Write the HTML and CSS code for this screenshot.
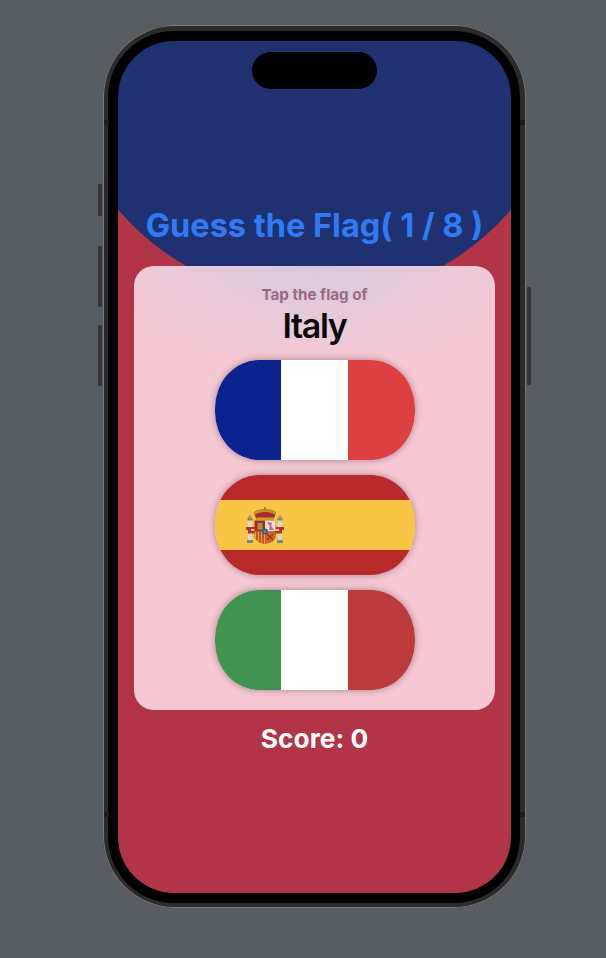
FILE: index.html
```html
<!DOCTYPE html>
<html lang="en">
<head>
<meta charset="utf-8">
<title>Guess the Flag</title>
<link rel="stylesheet" href="styles.css">
</head>
<body>
<div class="phone">
  <span class="side-btn action"></span>
  <span class="side-btn vol-up"></span>
  <span class="side-btn vol-down"></span>
  <span class="side-btn power"></span>
  <span class="band top-l"></span>
  <span class="band top-r"></span>
  <span class="band bot-l"></span>
  <span class="band bot-r"></span>
  <div class="bezel">
    <main class="screen">
      <div class="island"></div>
      <h1 class="title">Guess the Flag( 1 / 8 )</h1>
      <section class="card">
        <p class="prompt">Tap the flag of</p>
        <p class="country">Italy</p>
        <div class="flags">
          <button class="flag tricolor" aria-label="France">
            <span class="blue"></span><span class="white"></span><span class="red"></span>
          </button>
          <button class="flag spain" aria-label="Spain">
            <svg class="arms" viewBox="0 0 38 38" width="38" height="38" aria-hidden="true">
              <!-- pillars -->
              <rect x="1" y="33" width="6" height="3" fill="#6f8790"/>
              <rect x="31" y="33" width="6" height="3" fill="#6f8790"/>
              <rect x="2" y="13" width="4" height="20" fill="#dcd8c8"/>
              <rect x="32" y="13" width="4" height="20" fill="#dcd8c8"/>
              <rect x="1.5" y="11" width="5" height="2.5" fill="#8f8050"/>
              <rect x="31.5" y="11" width="5" height="2.5" fill="#8f8050"/>
              <circle cx="4" cy="10" r="1.8" fill="#a89868"/>
              <circle cx="34" cy="10" r="1.8" fill="#a89868"/>
              <!-- ribbons -->
              <path d="M0 20 H9 V22 H5 V24 H9 V26.5 H2 V23 H0 Z" fill="#b5322a"/>
              <path d="M38 20 H29 V22 H33 V24 H29 V26.5 H36 V23 H38 Z" fill="#b5322a"/>
              <!-- crown -->
              <path d="M8 6 C10 2.5 15 3 19 2 C23 3 28 2.5 30 6 L27.5 12.5 H10.5 Z" fill="#a92c28"/>
              <path d="M8 6 C10 3 15 3 19 2 C23 3 28 3 30 6 L29.2 8 C27 6 22.5 5 19 5 C15.5 5 11 6 8.8 8 Z" fill="#b9962f"/>
              <rect x="10.5" y="10.5" width="17" height="2.4" fill="#c9a12f"/>
              <rect x="18.2" y="0" width="1.6" height="3" fill="#8f7a2a"/>
              <!-- shield -->
              <path d="M8.5 13.5 H29.5 V29 C29.5 33.5 24 36.5 19 36.5 C14 36.5 8.5 33.5 8.5 29 Z" fill="#a82a24"/>
              <rect x="19" y="13.5" width="10.5" height="11" fill="#e6dadd"/>
              <path d="M21 15 L26 16 L25 19 L28 23 L23 23 L24 19 Z" fill="#b8678a"/>
              <rect x="11.5" y="16" width="5" height="6.5" fill="#a8933a"/>
              <path d="M8.5 24.5 H19 V36.5 C14 36.5 8.5 33.5 8.5 29 Z" fill="#dca62c"/>
              <path d="M11 24.5 V33 M14 24.5 V35.5 M17 24.5 V36.5" stroke="#b5322a" stroke-width="1.4" fill="none"/>
              <path d="M19 24.5 H29.5 V29 C29.5 33.5 24 36.5 19 36.5 Z" fill="#c9662c"/>
              <path d="M21 27 L27 33 M27 27 L21 33" stroke="#a82a24" stroke-width="1.1"/>
              <circle cx="19" cy="24.5" r="3" fill="#2c5f9a"/>
              <circle cx="19" cy="24.5" r="1.2" fill="#7a9a5a"/>
            </svg>
          </button>
          <button class="flag tricolor italy" aria-label="Italy">
            <span class="green"></span><span class="white"></span><span class="red"></span>
          </button>
        </div>
      </section>
      <p class="score">Score: 0</p>
    </main>
  </div>
</div>
</body>
</html>
```
FILE: styles.css
```css
* { box-sizing: border-box; }

html, body {
  margin: 0;
  height: 100%;
}

body {
  background: #585c63;
  padding: 25px 0 0 103px;
  overflow: hidden;
  font-family: Inter, "Liberation Sans", sans-serif;
}

.phone {
  position: relative;
  width: 423px;
  height: 883px;
  padding: 6px 6px 5px 5px;
  border-radius: 72px;
  background: #2b2b2b;
  box-shadow: inset 0 0 0 1px #77797c;
}

.side-btn {
  position: absolute;
  background: #343536;
  border-radius: 1px;
}
.action   { left: -5px; top: 159px; width: 4px; height: 32px; }
.vol-up   { left: -5px; top: 221px; width: 4px; height: 61px; }
.vol-down { left: -5px; top: 300px; width: 4px; height: 61px; }
.power    { right: -5px; top: 262px; width: 4px; height: 98px; }

.band {
  position: absolute;
  background: #1c1c1c;
}
.top-l { left: 1px; top: 95px; width: 5px; height: 5px; }
.top-r { right: 1px; top: 95px; width: 5px; height: 5px; }
.bot-l { left: 1px; top: 787px; width: 5px; height: 5px; }
.bot-r { right: 1px; top: 787px; width: 5px; height: 5px; }

.bezel {
  height: 100%;
  padding: 10px 9px 10px 10px;
  background: #000;
  border-radius: 66px;
}

.screen {
  position: relative;
  height: 100%;
  display: flex;
  flex-direction: column;
  align-items: center;
  padding-top: 161px;
  border-radius: 56px;
  overflow: hidden;
  background: radial-gradient(circle 258.5px at 196.5px 1px, #1f3170 99.7%, #b13547 100%);
}

.island {
  position: absolute;
  left: 134px;
  top: 11px;
  width: 125px;
  height: 37px;
  border-radius: 19px;
  background: #000;
}

.title {
  margin: 0;
  font-size: 32.5px;
  line-height: 48px;
  font-weight: 700;
  color: #2f7bf6;
  white-space: nowrap;
}

.card {
  width: 361px;
  height: 444px;
  margin-top: 16px;
  border-radius: 20px;
  display: flex;
  flex-direction: column;
  align-items: center;
  padding-top: 20px;
  background: radial-gradient(ellipse 230px 100px at 50% 0, #d9cadf, #f6c8d3);
}

.prompt {
  margin: 0;
  font-size: 15.2px;
  line-height: 18px;
  font-weight: 700;
  color: #996a88;
}

.country {
  margin: 1px 0 0;
  font-size: 34px;
  line-height: 42px;
  font-weight: 600;
  letter-spacing: -1.4px;
  color: #0a0a0a;
}

.flags {
  display: flex;
  flex-direction: column;
  gap: 15px;
  margin-top: 13px;
}

.flag {
  width: 200px;
  height: 100px;
  padding: 0;
  border: 0;
  border-radius: 44px / 48px;
  overflow: hidden;
  display: flex;
  box-shadow: 0 0 7px rgba(60, 30, 40, 0.4);
}

.tricolor span { flex: 1; }
.blue  { background: #0a238e; }
.white { background: #fff; }
.red   { background: #dd4040; }
.green { background: #41934f; }
.italy .red { background: #bd3b3b; }

.spain {
  align-items: flex-start;
  padding: 32px 0 0 31px;
  background: linear-gradient(#b82a29 25%, #f8c644 25%, #f8c644 75%, #b82a29 75%);
}

.arms { flex: none; }

.score {
  margin: 10px 0 0;
  font-size: 26.3px;
  line-height: 38px;
  font-weight: 700;
  color: #fff;
}
```
